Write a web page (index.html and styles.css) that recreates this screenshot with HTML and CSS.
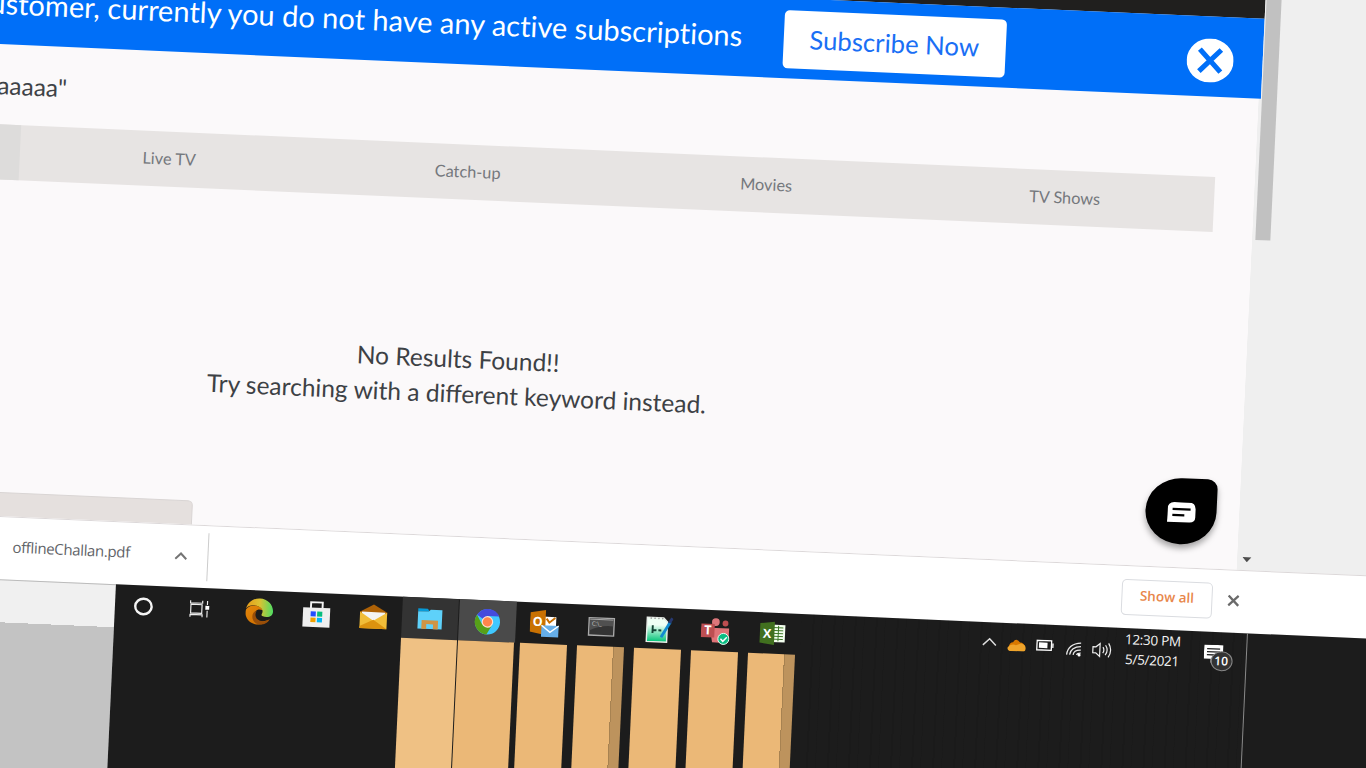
FILE: index.html
```html
<!DOCTYPE html>
<html lang="en">
<head>
<meta charset="utf-8">
<title>Search results</title>
<link rel="stylesheet" href="styles.css">
</head>
<body>
<div class="viewport">
<div class="stage">
  <div class="browser">
    <main class="page">
      <div class="site-header"></div>
      <section class="banner">
        <p class="banner-text">ustomer, currently you do not have any active subscriptions</p>
        <a class="subscribe">Subscribe Now</a>
        <svg class="banner-close" viewBox="0 0 46 44" preserveAspectRatio="none"><ellipse cx="23" cy="22" rx="23" ry="22" fill="#fff"/><path d="M12.500 11 33.500 33M33.500 11 12.500 33" stroke="#006ff8" stroke-width="5"/></svg>
      </section>
      <h1 class="query"><span>aaaaa"</span></h1>
      <nav class="tabs">
        <span class="tab active"></span><span class="tab">Live TV</span><span class="tab">Catch-up</span><span class="tab">Movies</span><span class="tab">TV Shows</span>
      </nav>
      <div class="empty"><p>No Results Found!!</p><p>Try searching with a different keyword instead.</p></div>
      <div class="footer-card"></div>
      <div class="chat"><svg width="29" height="21" viewBox="0 0 29 21"><path d="M7 0H21Q28 0 28 7V15Q28 20 22 20H0V7Q0 0 7 0Z" fill="#fff"/><path d="M5 7H23M5 13H17" stroke="#000" stroke-width="2.300"/></svg></div>
    </main>
    <aside class="gutter"><div class="thumb"></div><svg class="down" width="9" height="5" viewBox="0 0 9 5"><path d="M0 0H9L4.500 5Z" fill="#4d4d4d"/></svg></aside>
  </div>
  <div class="shelf">
    <span class="file">offlineChallan.pdf</span>
    <svg class="file-caret" width="13" height="8" viewBox="0 0 13 8"><path d="M1 7 6.500 1.500 12 7" fill="none" stroke="#757575" stroke-width="2"/></svg>
    <span class="divider"></span>
    <a class="show-all">Show all</a>
    <svg class="shelf-close" width="12" height="12" viewBox="0 0 12 12"><path d="M1 1 11 11M11 1 1 11" stroke="#6b6b6b" stroke-width="2.300"/></svg>
  </div>
  <div class="bottom">
    <div class="outside"></div>
    <div class="desktop">
      <div class="apps">
        <div class="app"><div class="icon"><svg viewBox="0 0 30 30"><ellipse cx="15" cy="14.500" rx="8.500" ry="8" fill="none" stroke="#f4f4f4" stroke-width="2.500"/></svg></div></div>
        <div class="app nudge"><div class="icon"><svg viewBox="0 0 30 30" fill="none" stroke="#eee" stroke-width="1.200"><path d="M5 10H16.500V19H5ZM4.500 6V8.500H17V6M4.500 23V20.500H17V23M22 6V10M22 16V23"/><path d="M20 11H24V15H20Z" fill="#fff" stroke="none"/></svg></div></div>
        <div class="app"><div class="icon"><svg viewBox="0 0 30 30">
          <defs><linearGradient id="edge-top"><stop offset="0" stop-color="#e79b18"/><stop offset=".5" stop-color="#dbc232"/><stop offset="1" stop-color="#4edc63"/></linearGradient><linearGradient id="edge-side" x2="1" y2="1"><stop offset="0" stop-color="#e4860a"/><stop offset="1" stop-color="#c86b00"/></linearGradient></defs>
          <path d="M1 12C3 5 8 1 15 1C23 1 29 7 29 14C29 19 24 21 18 19C16 18 19 16 18 13C15 8 5 6 1 12Z" fill="url(#edge-top)"/>
          <path d="M1 13C5 6 16 8 18 13C12 10 7 17 11 22C14 26 21 25 26 22C20 31 4 30 1 19Q.500 16 1 13Z" fill="url(#edge-side)"/><path d="M12 14C8 22 17 28 26 22C23 28 17 29 12 27C6 23 7 15 12 14Z" fill="#994e08"/></svg></div></div>
        <div class="app"><div class="icon"><svg viewBox="0 0 30 30"><path d="M9 9V2.500H21V9" fill="none" stroke="#f5f5f5" stroke-width="2"/><path d="M1 8H29V28H1Z" fill="#efefef"/><path d="M9 12H14.300V17H9Z" fill="#244dff"/><path d="M15.700 12H21V17H15.700Z" fill="#08bd7d"/><path d="M9 18.300H14.300V23H9Z" fill="#efa000"/><path d="M15.700 18.300H21V23H15.700Z" fill="#00b6f5"/></svg></div></div>
        <div class="app"><div class="icon"><svg viewBox="0 0 30 30"><path d="M1 10 15 2 29 10V14H1Z" fill="#ad6106"/><path d="M3 10H27V20H3Z" fill="#f4f4f4"/><path d="M1 10 15 19 29 10V27H1Z" fill="#f1bd38"/><path d="M15 18 29 27H1V25Z" fill="#dc930f"/></svg></div></div>
        <div class="app lit pale"><div class="icon"><svg viewBox="0 0 30 30"><path d="M3 4H13L15 7H3Z" fill="#069bd9"/><path d="M3 7H14L16 5H28V25H3Z" fill="#5ed1fa"/><path d="M7 25V16H24V25H19V20H12V25Z" fill="#cf9444"/></svg></div><div class="bar"></div></div>
        <div class="app bright"><div class="icon"><svg viewBox="0 0 30 30"><circle cx="15" cy="15" r="13" fill="#40c8ff"/><path d="M15 15 4 8A13 13 0 0 1 27 9H15Z" fill="#454bdd"/><path d="M4 8A13 13 0 0 0 14.500 28L20 18 9 17Z" fill="#57a018"/><circle cx="15" cy="15" r="6" fill="#ffe1d0"/><circle cx="15" cy="15" r="4.800" fill="#ff854c"/></svg></div><div class="bar"></div></div>
        <div class="app gap"><div class="icon"><svg viewBox="0 0 30 30"><path d="M13 7H27V19H13Z" fill="#fff"/><path d="M17 9 20 13 26 8" stroke="#c86e00" stroke-width="2" fill="none"/><path d="M0 3 16 0V26L0 23Z" fill="#c97102"/><text x="8" y="17" class="glyph">O</text><path d="M12 16H30V28H12Z" fill="#65aee9"/><path d="M12 16 21 23 30 16" stroke="#fff" fill="none" stroke-width="1.500"/></svg></div><div class="bar"></div></div>
        <div class="app gap stack"><div class="icon"><svg viewBox="0 0 30 30"><path d="M2 6H28V24H2Z" fill="#343434" stroke="#aaa" stroke-width="1.400"/><path d="M3 7H27V14Q15 13 3 19Z" fill="#505050"/><path d="M3 7.500H27" stroke="#aaa"/><text x="10" y="14" class="prompt">C:\_</text></svg></div><div class="bar"></div></div>
        <div class="app gap"><div class="icon"><svg viewBox="0 0 30 30"><defs><linearGradient id="note" x2="0" y2="1"><stop offset=".3" stop-color="#effff5"/><stop offset=".95" stop-color="#11c77f"/></linearGradient></defs><path d="M3 3H20L24 7V28H3Z" fill="url(#note)" stroke="#e9eee9" stroke-width="1.500"/><path d="M7 3V4.500M11 3V4.500M15 3V4.500M19 3V4.500" stroke="#777"/><path d="M9 11V19M9 16H13M15 16H18" stroke="#134334" stroke-width="2"/><path d="M18 23 27 7" stroke="#118bd0" stroke-width="3"/><path d="M26 8 29 3" stroke="#263870" stroke-width="3"/></svg></div><div class="bar"></div></div>
        <div class="app gap"><div class="icon"><svg viewBox="0 0 30 30"><circle cx="15" cy="5" r="4" fill="#dc777b"/><circle cx="25" cy="6" r="3" fill="#bd4d50"/><path d="M9 11H29V20Q26 26 20 26H12Z" fill="#df7377"/><path d="M0 7H14V21H0Z" fill="#bd4f52"/><text x="7" y="18" class="glyph">T</text><circle cx="23.500" cy="22" r="5.700" fill="#0bbd83" stroke="#e6fff5"/><path d="M20.500 22 23 24.500 27 20" stroke="#fff" fill="none" stroke-width="1.500"/></svg></div><div class="bar"></div></div>
        <div class="app gap stack"><div class="icon"><svg viewBox="0 0 30 30"><path d="M13 5H28V23H13Z" fill="#f4fff0"/><path d="M15 8H26M15 11H26M15 14H26M15 17H26M15 20H26M21 6V22" stroke="#3c7624"/><path d="M2 4 17 2V26L2 24Z" fill="#41701f"/><text x="9.500" y="19" class="glyph">X</text></svg></div><div class="bar"></div></div>
      </div>
      <div class="tray">
        <svg width="15" height="10" viewBox="0 0 15 10"><path d="M1 8 7.500 1.500 14 8" fill="none" stroke="#ddd" stroke-width="1.500"/></svg>
        <svg width="19" height="13" viewBox="0 0 19 13"><path d="M2 8Q3 4 6 4Q9-1 13 4Q17 4 18 8L16 12H3Z" fill="#d87800"/><path d="M1 9Q5 5 9 7L14 5Q19 6 19 10Q19 13 15 13H3Q0 12 1 9Z" fill="#efa42b"/></svg>
        <svg width="18" height="12" viewBox="0 0 18 12"><path d="M1 1H15.500V10.500H1ZM17 3.500V8" fill="none" stroke="#fff" stroke-width="1.300"/><path d="M3 3H11.500V8.500H3Z" fill="#fff"/></svg>
        <svg width="16" height="16" viewBox="0 0 16 16" fill="none" stroke="#e9e9e9" stroke-width="1.300"><path d="M1 14Q2 3 15 2M4 14Q5 6 15 5.500M7.500 14Q8 9 15 9M11 14Q11.500 12 15 12"/><circle cx="13.500" cy="14" r="1.500" fill="#fff" stroke="none"/></svg>
        <svg width="20" height="16" viewBox="0 0 20 16" fill="none" stroke="#eee" stroke-width="1.200"><path d="M1 5H4L8 1.500V14.500L4 11H1ZM11 5Q13 8 11 11M13.500 3Q17 8 13.500 13M16.500 1Q21 8 16.500 15"/></svg>
        <div class="clock"><span>12:30 PM</span><span>5/5/2021</span></div>
        <div class="notify"><svg width="20" height="19" viewBox="0 0 20 19"><path d="M0 0H19V14H12L7 18V14H0Z" fill="#fff"/><path d="M3 4H16M3 7H16M3 10H11" stroke="#222" stroke-width="1.300"/></svg><span class="badge">10</span></div>
      </div>
    </div>
  </div>
</div>
</div>
</body>
</html>
```

FILE: styles.css
```css
* { box-sizing: border-box; }
body { margin: 0; background: #efefef; font-family: Lato, sans-serif; }
p, h1 { margin: 0; font-weight: 400; }
svg { display: block; flex: none; }
.viewport { width: 1366px; height: 768px; overflow: hidden; }
.stage { width: 1412px; height: 832px; display: flex; flex-direction: column; transform-origin: 0 0; transform: matrix(1, .0434, -.0468, 1, -7.2, -60.4); }

.browser { height: 575px; flex: none; display: flex; background: #efefef; }
.page { width: 1272.500px; height: 100%; overflow: hidden; flex: none; display: flex; flex-direction: column; background: linear-gradient(91deg, #fbf9fa 1275.500px, #efefef 1276px); position: relative; }
.page { background: linear-gradient(90deg, #fbf9fa 1270.500px, #efefef 1271px); }
.site-header { height: 24px; flex: none; background: #201f1e; }
.banner { height: 80.300px; flex: none; background: #006ff8; display: flex; align-items: center; justify-content: flex-end; padding-right: 29px; color: #fff; }
.banner-text { font-size: 29px; white-space: nowrap; margin-right: 41px; padding-bottom: 3px; font-variant-ligatures: none; }
.subscribe { width: 222px; height: 58px; flex: none; margin-top: 1px; padding-bottom: 2px; border-radius: 5px; background: #fff; color: #1a6ff5; font-size: 25.700px; display: flex; align-items: center; justify-content: center; white-space: nowrap; }
.banner-close { width: 47px; height: 44px; margin: 8px 0 0 181px; }
.query { height: 80px; flex: none; display: flex; align-items: center; width: 81px; justify-content: flex-end; white-space: nowrap; font-size: 24.500px; color: #3f4347; }
.tabs { height: 55px; flex: none; width: 1231px; display: flex; background: #e7e4e3; }
.tab { flex: 1; display: flex; align-items: center; justify-content: center; font-size: 16.300px; color: #75787d; padding-bottom: 2px; }
.tab.active { flex: 0 0 37px; background: #dddcdb; }
.empty { width: 968px; margin-top: 141px; text-align: center; font-size: 24.500px; line-height: 35px; color: #3d4145; }
.footer-card { width: 225.500px; height: 30px; margin-top: 101px; flex: none; border: 1px solid #d9d5d4; border-radius: 5px; background: #e5e0de; }
.chat { position: absolute; left: 1177px; top: 486px; width: 71px; height: 66px; background: #000; border-radius: 50% 10px 50% 50%; display: flex; align-items: center; justify-content: center; padding: 3px 0 0 2px; box-shadow: 0 4px 6px rgba(0,0,0,.35); }
.gutter { display: flex; flex-direction: column; justify-content: space-between; padding: 0 0 8px 1.500px; }
.thumb { width: 15px; height: 245.300px; background: #c1c1c1; }
.down { margin-left: 2px; }

.shelf { height: 62.500px; flex: none; background: #fff; border-top: 1px solid #dcd8d9; display: flex; align-items: center; padding-left: 48px; }
.file { width: 162px; padding-bottom: 4px; font: 15px "Open Sans", sans-serif; color: #5f6368; letter-spacing: -.35px; }
.divider { width: 1px; height: 48px; background: #ccc; margin-left: 20px; }
.show-all { width: 91px; height: 36px; margin-left: 913px; padding-bottom: 4px; border: 1px solid #dadce0; border-radius: 5px; color: #e8864a; font: 600 13.500px "Open Sans", sans-serif; display: flex; align-items: center; justify-content: center; }
.shelf-close { margin: -2px 0 0 15px; }

.bottom { flex: 1; display: flex; }
.outside { width: 153px; flex: none; background: linear-gradient(#f0f0f0 0 42px, #c3c3c3 42px); border-top: 1px solid #bbb; }
.desktop { flex: 1; display: flex; background: #1c1c1c; }
.apps { display: flex; flex: none; width: 685.500px; }
.app { width: 57px; flex: none; display: flex; flex-direction: column; }
.nudge { width: 58.500px; padding-right: 2.500px; }
.icon { height: 41.500px; flex: none; display: flex; align-items: center; justify-content: center; padding-top: 3px; }
.icon svg { width: 29px; height: 29px; }
.bar { flex: 1; margin-right: 1px; background: #ebb877; }
.lit .icon { background: #333; margin-right: 1px; }
.pale .bar { background: #efc184; }
.bright .icon { background: #4a4a4a; }
.gap .icon { padding-left: 1.500px; }
.gap .bar { margin: 0 5px 0 5px; }
.stack .bar { background: linear-gradient(90deg, #ebb877 0 36px, #a78251 36px 37px, #bd935d 37px); }
.glyph { fill: #fff; font: 700 13px "Open Sans", sans-serif; text-anchor: middle; }
.prompt { fill: #ccc; font: 6px "Open Sans", sans-serif; text-anchor: middle; }
.tray { width: 446px; height: 100%; flex: none; display: flex; justify-content: flex-end; align-items: flex-start; gap: 10px; padding: 14px 12px 0 0; border-right: 1px solid #8a8a8a; background: repeating-linear-gradient(90deg, transparent 0 11px, rgba(0,0,0,.08) 11px 13px, transparent 13px 20px, rgba(0,0,0,.06) 20px 21px); }
.tray > svg { margin-top: 1px; }
.tray > svg:nth-child(-n+3) { position: relative; left: -2px; }
.clock { width: 58px; margin: -13px 0 0 2px; display: flex; flex-direction: column; align-items: center; font: 13.500px/20px "Open Sans", sans-serif; color: #f5f5f5; white-space: nowrap; letter-spacing: -.3px; }
.notify { position: relative; width: 30px; margin: -1px 0 0 12px; }
.badge { position: absolute; left: 7px; top: 6px; width: 22px; height: 20px; border: 1px solid #888; border-radius: 50%; background: #333; color: #fff; font: 600 12px/18px "Open Sans", sans-serif; text-align: center; }
```
